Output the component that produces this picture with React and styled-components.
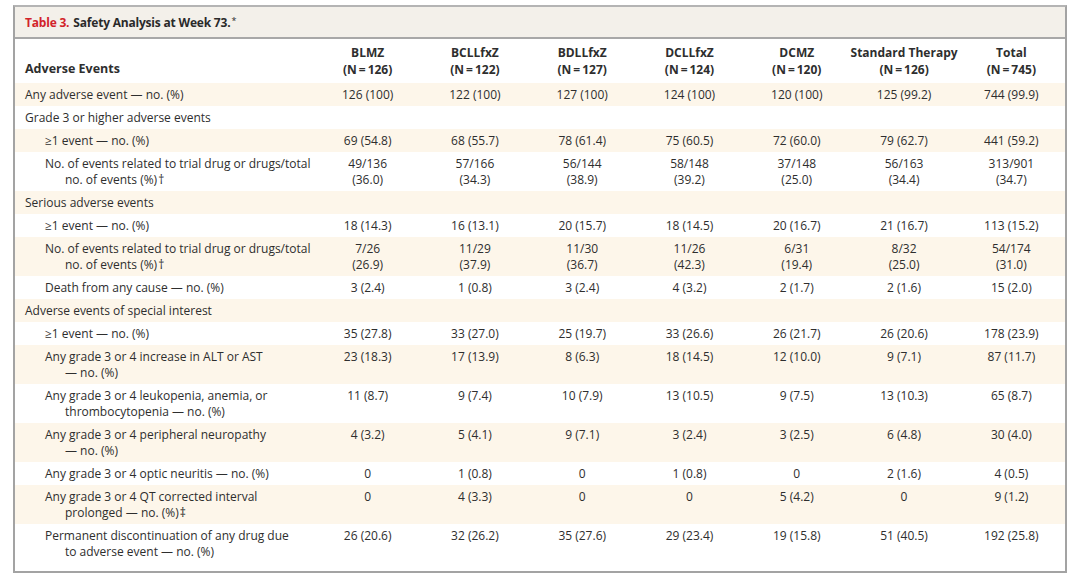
import React from 'react';
import styled, { createGlobalStyle } from 'styled-components';

const GlobalStyle = createGlobalStyle`
  body {
    margin: 0;
    background: #ffffff;
    font-family: "Open Sans", "Liberation Sans", sans-serif;
    color: #2e2e2e;
  }
`;

// --- Estructura ---
const Page = styled.div`
  padding: 5px 13px 6px 13px;
  width: 1080px;
  box-sizing: border-box;
`;

const Frame = styled.div`
  border: 2px solid #a3a3a3;
  border-top-color: #b4b4b4;
  background: #fff;
  padding-bottom: 8px;
`;

const TitleBar = styled.div`
  background: #f3f0ea;
  border-bottom: 2px solid #a8a8a8;
  height: 30px;
  display: flex;
  align-items: center;
  padding-left: 10px;
  font-size: 12px;
  letter-spacing: -0.2px;
  font-weight: 700;
  color: #2a2a2a;
`;

const Red = styled.span`
  color: #d2232a;
  margin-right: 4px;
`;

const Star = styled.span`
  font-size: 9px;
  font-weight: 400;
  align-self: flex-start;
  margin-top: 7px;
  margin-left: 1px;
`;

const Table = styled.table`
  width: 100%;
  border-collapse: collapse;
  table-layout: fixed;
  font-size: 12px;
  line-height: 16px;
`;

const HeadCell = styled.th`
  font-weight: 700;
  text-align: ${p => (p.$left ? 'left' : 'center')};
  vertical-align: bottom;
  padding: ${p => (p.$left ? '0 0 6px 10px' : '0 0 5px 0')};
  height: 38px;
  line-height: 17px;
  font-size: ${p => (p.$left ? '12.5px' : '12px')};
`;

const Row = styled.tr`
  background: ${p => (p.$shaded ? '#fdf6ea' : '#ffffff')};
`;

const Label = styled.td`
  padding: 4px 0 3px ${p => 10 + p.$indent * 20}px;
  vertical-align: top;
  text-align: left;
`;

const Hang = styled.span`
  display: block;
  padding-left: 20px;
`;

const Value = styled.td`
  padding: 4px 0 3px 0;
  vertical-align: top;
  text-align: center;
  white-space: pre-line;
`;

const Sym = styled.span`
  font-size: 12px;
  margin-left: 1px;
`;

const cols = [
  ['BLMZ', '(N\u2009=\u2009126)'],
  ['BCLLfxZ', '(N\u2009=\u2009122)'],
  ['BDLLfxZ', '(N\u2009=\u2009127)'],
  ['DCLLfxZ', '(N\u2009=\u2009124)'],
  ['DCMZ', '(N\u2009=\u2009120)'],
  ['Standard Therapy', '(N\u2009=\u2009126)'],
  ['Total', '(N\u2009=\u2009745)'],
];

const rows = [
  { label: 'Any adverse event — no. (%)', indent: 0, vals: ['126 (100)', '122 (100)', '127 (100)', '124 (100)', '120 (100)', '125 (99.2)', '744 (99.9)'] },
  { label: 'Grade 3 or higher adverse events', indent: 0 },
  { label: '≥1 event — no. (%)', indent: 1, vals: ['69 (54.8)', '68 (55.7)', '78 (61.4)', '75 (60.5)', '72 (60.0)', '79 (62.7)', '441 (59.2)'] },
  { label: 'No. of events related to trial drug or drugs/total', hang: 'no. of events (%)', sym: '†', indent: 1, vals: ['49/136\n(36.0)', '57/166\n(34.3)', '56/144\n(38.9)', '58/148\n(39.2)', '37/148\n(25.0)', '56/163\n(34.4)', '313/901\n(34.7)'] },
  { label: 'Serious adverse events', indent: 0 },
  { label: '≥1 event — no. (%)', indent: 1, vals: ['18 (14.3)', '16 (13.1)', '20 (15.7)', '18 (14.5)', '20 (16.7)', '21 (16.7)', '113 (15.2)'] },
  { label: 'No. of events related to trial drug or drugs/total', hang: 'no. of events (%)', sym: '†', indent: 1, vals: ['7/26\n(26.9)', '11/29\n(37.9)', '11/30\n(36.7)', '11/26\n(42.3)', '6/31\n(19.4)', '8/32\n(25.0)', '54/174\n(31.0)'] },
  { label: 'Death from any cause — no. (%)', indent: 1, vals: ['3 (2.4)', '1 (0.8)', '3 (2.4)', '4 (3.2)', '2 (1.7)', '2 (1.6)', '15 (2.0)'] },
  { label: 'Adverse events of special interest', indent: 0 },
  { label: '≥1 event — no. (%)', indent: 1, vals: ['35 (27.8)', '33 (27.0)', '25 (19.7)', '33 (26.6)', '26 (21.7)', '26 (20.6)', '178 (23.9)'] },
  { label: 'Any grade 3 or 4 increase in ALT or AST', hang: '— no. (%)', indent: 1, vals: ['23 (18.3)', '17 (13.9)', '8 (6.3)', '18 (14.5)', '12 (10.0)', '9 (7.1)', '87 (11.7)'] },
  { label: 'Any grade 3 or 4 leukopenia, anemia, or', hang: 'thrombocytopenia — no. (%)', indent: 1, vals: ['11 (8.7)', '9 (7.4)', '10 (7.9)', '13 (10.5)', '9 (7.5)', '13 (10.3)', '65 (8.7)'] },
  { label: 'Any grade 3 or 4 peripheral neuropathy', hang: '— no. (%)', indent: 1, vals: ['4 (3.2)', '5 (4.1)', '9 (7.1)', '3 (2.4)', '3 (2.5)', '6 (4.8)', '30 (4.0)'] },
  { label: 'Any grade 3 or 4 optic neuritis — no. (%)', indent: 1, vals: ['0', '1 (0.8)', '0', '1 (0.8)', '0', '2 (1.6)', '4 (0.5)'] },
  { label: 'Any grade 3 or 4 QT corrected interval', hang: 'prolonged — no. (%)', sym: '‡', indent: 1, vals: ['0', '4 (3.3)', '0', '0', '5 (4.2)', '0', '9 (1.2)'] },
  { label: 'Permanent discontinuation of any drug due', hang: 'to adverse event — no. (%)', indent: 1, vals: ['26 (20.6)', '32 (26.2)', '35 (27.6)', '29 (23.4)', '19 (15.8)', '51 (40.5)', '192 (25.8)'] },
];

export default function App() {
  return (
    <Page>
      <GlobalStyle />
      <Frame>
        <TitleBar>
          <Red>Table 3.</Red> Safety Analysis at Week 73.<Star>*</Star>
        </TitleBar>
        <Table>
          <colgroup>
            <col style={{ width: '299px' }} />
            {cols.map((c, i) => <col key={i} />)}
          </colgroup>
          <thead>
            <tr>
              <HeadCell $left>Adverse Events</HeadCell>
              {cols.map(([name, n]) => (
                <HeadCell key={name}>
                  {name}
                  <br />
                  {n}
                </HeadCell>
              ))}
            </tr>
          </thead>
          <tbody>
            {rows.map((r, i) => (
              <Row key={i} $shaded={i % 2 === 0}>
                <Label $indent={r.indent}>
                  {r.label}
                  {r.hang && (
                    <Hang>
                      {r.hang}
                      {r.sym && <Sym>{r.sym}</Sym>}
                    </Hang>
                  )}
                </Label>
                {(r.vals || Array(7).fill('')).map((v, j) => (
                  <Value key={j}>{v}</Value>
                ))}
              </Row>
            ))}
          </tbody>
        </Table>
      </Frame>
    </Page>
  );
}
